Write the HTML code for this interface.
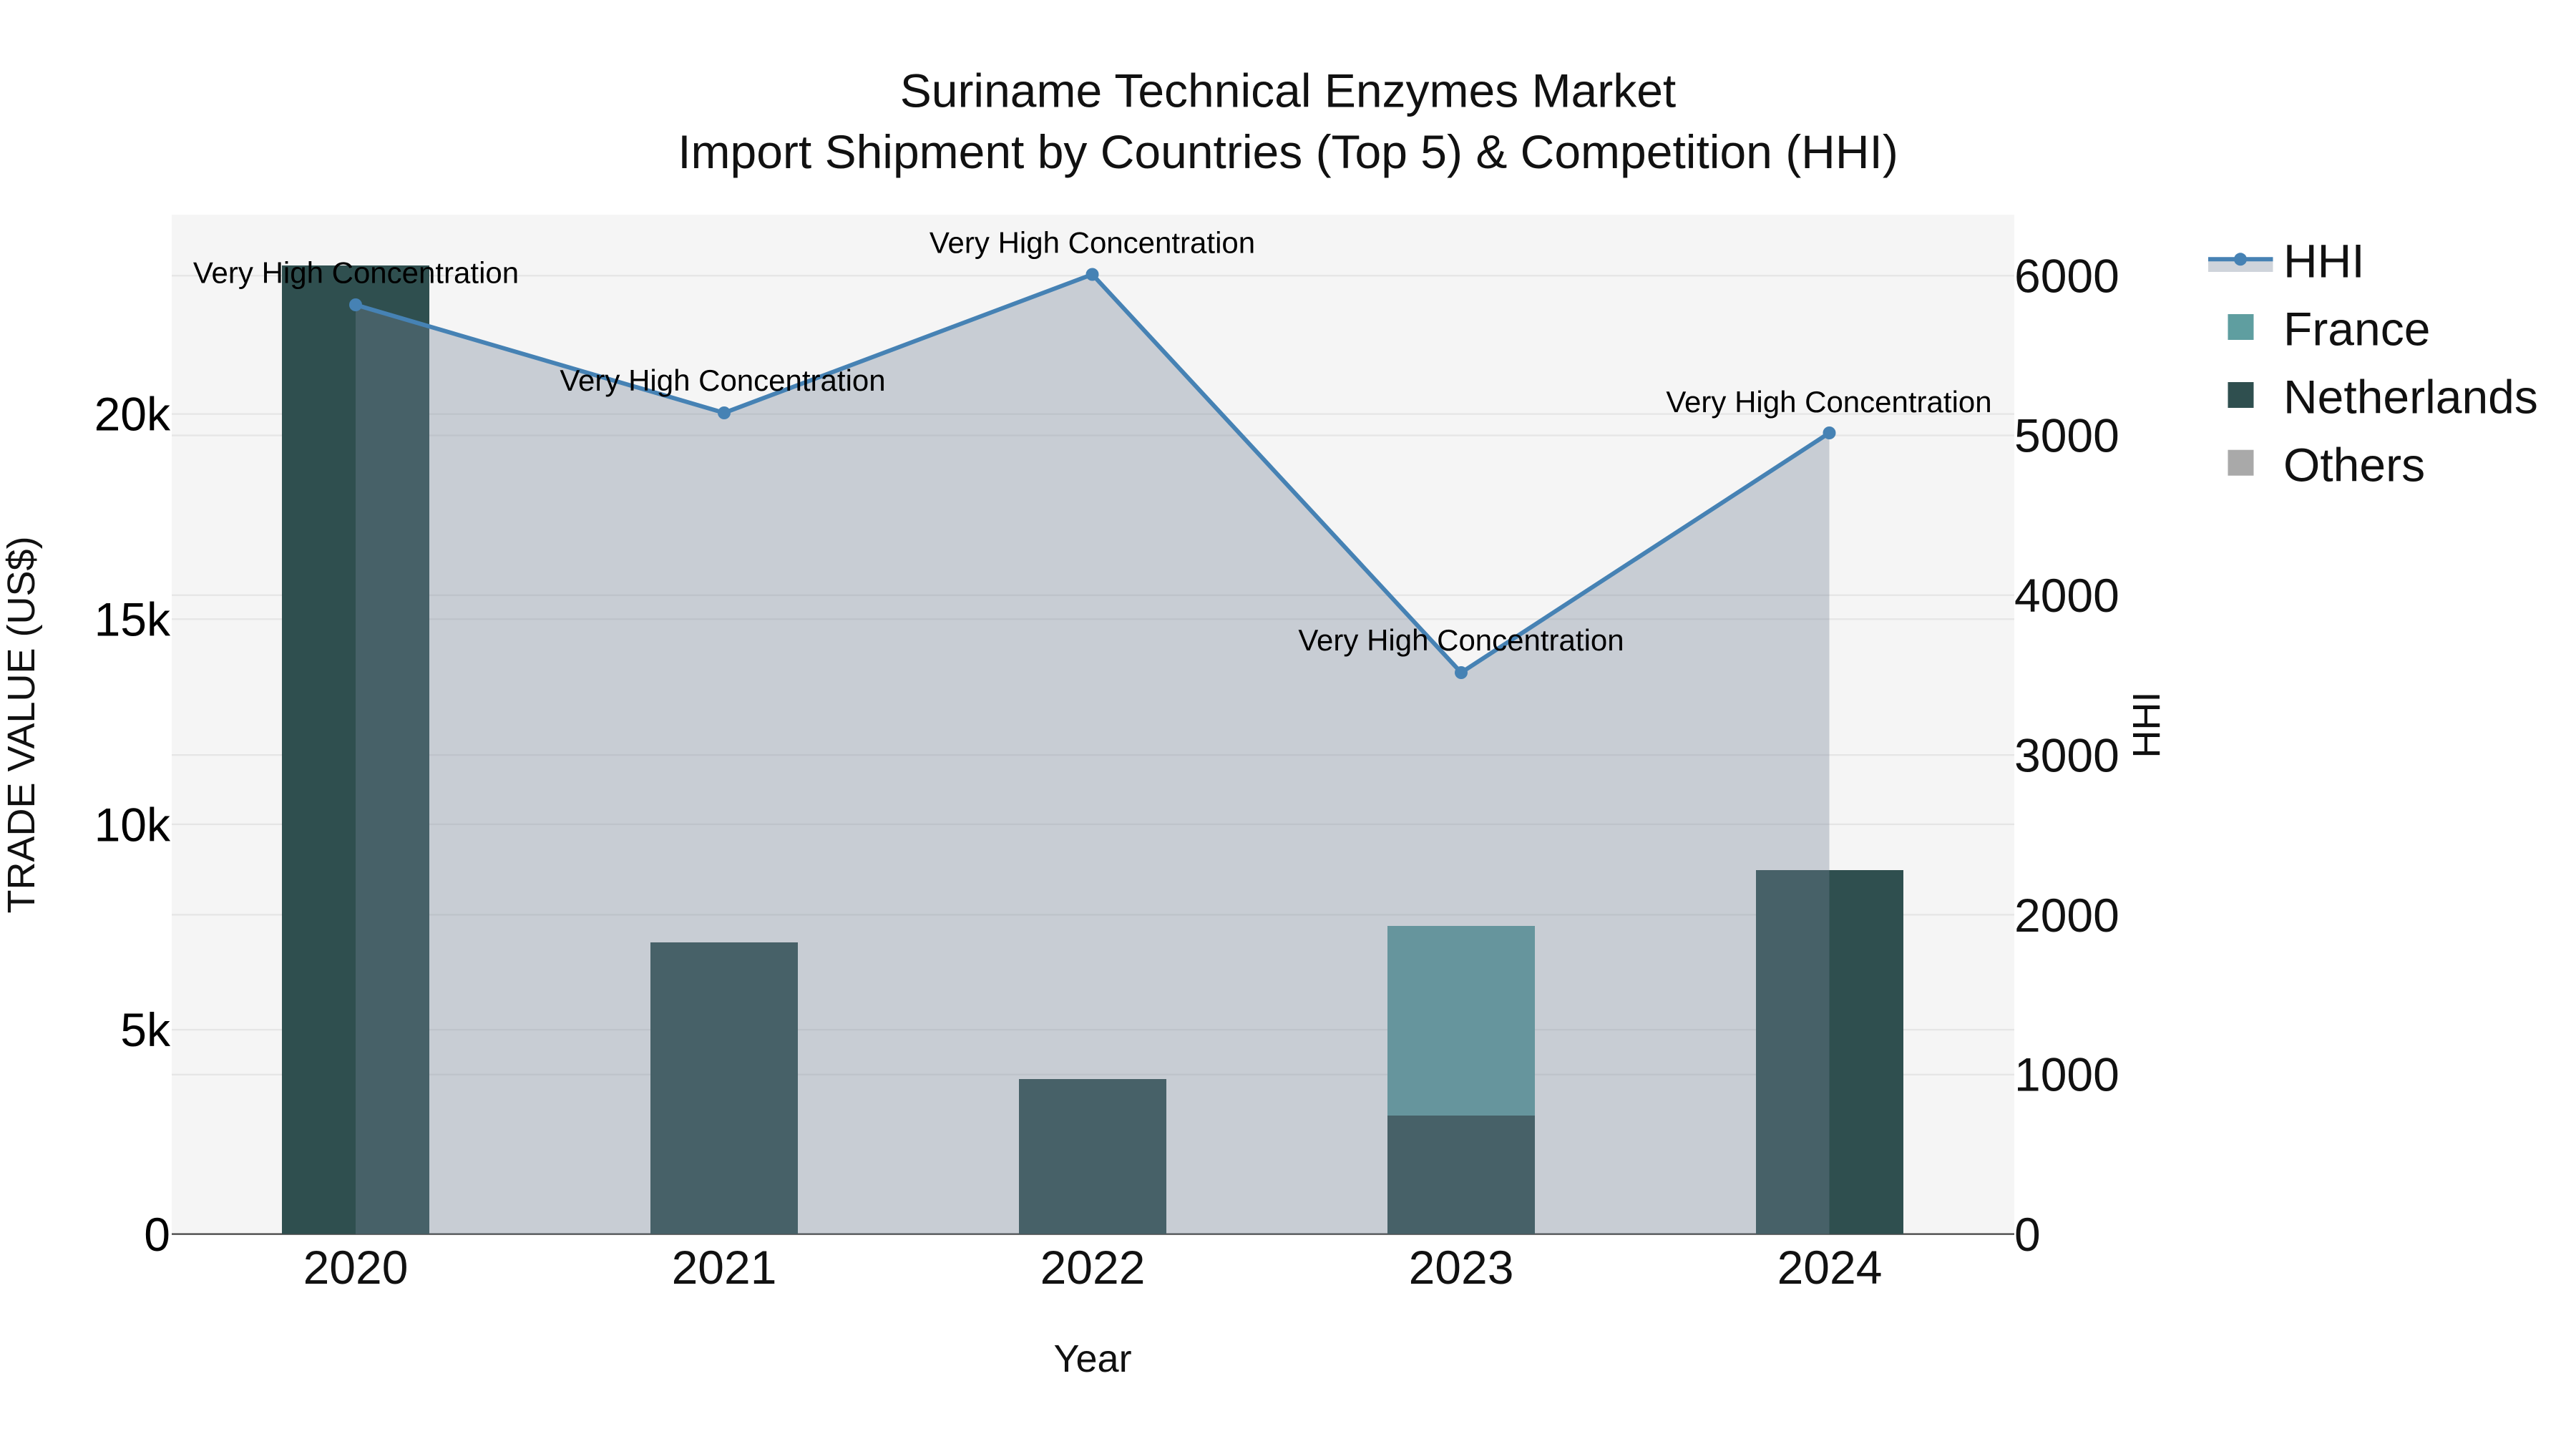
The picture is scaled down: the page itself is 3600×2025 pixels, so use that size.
<!DOCTYPE html>
<html>
<head>
<meta charset="utf-8">
<title>Suriname Technical Enzymes Market</title>
<style>
html,body{margin:0;padding:0;background:#fff;width:3600px;height:2025px;overflow:hidden}
svg{display:block}
text{font-family:"Liberation Sans",Arial,sans-serif;white-space:pre}
.tick{font-size:66px;fill:#111}
.ann{font-size:42px;fill:#000;text-anchor:middle}
.at{font-size:54px;fill:#111}
.t{font-size:66px;fill:#111;text-anchor:middle}
</style>
</head>
<body>
<svg xmlns="http://www.w3.org/2000/svg" width="3600" height="2025" viewBox="0 0 3600 2025">
<rect width="3600" height="2025" fill="#fff"/>
<rect x="240" y="300" width="2575" height="1425" fill="#f5f5f5"/>

<g stroke="#e5e5e5" stroke-width="2.25" fill="none">
<path d="M240 1439H2815M240 1152H2815M240 865.3H2815M240 578.6H2815"/>
<path d="M240 1501.7H2815M240 1278.4H2815M240 1055.1H2815M240 831.8H2815M240 608.5H2815M240 385.2H2815"/>
</g>
<line x1="240" y1="1724.6" x2="2815" y2="1724.6" stroke="#444" stroke-width="2.25"/>

<g>
<rect x="394" y="371" width="206" height="1353.5" fill="#2f4f4f"/>
<rect x="909" y="1317" width="206" height="407.5" fill="#2f4f4f"/>
<rect x="1424" y="1508" width="206" height="216.5" fill="#2f4f4f"/>
<rect x="1939" y="1294" width="206" height="265" fill="#5f9ea0"/>
<rect x="1939" y="1559" width="206" height="165.5" fill="#2f4f4f"/>
<rect x="2454" y="1216" width="206" height="508.5" fill="#2f4f4f"/>
</g>

<polygon points="497,426 1012,577 1526.5,383.5 2042,940 2556.5,605 2556.5,1724.6 497,1724.6" fill="rgb(118,131,153)" fill-opacity="0.35"/>
<polyline points="497,426 1012,577 1526.5,383.5 2042,940 2556.5,605" fill="none" stroke="#4682b4" stroke-width="6" stroke-linejoin="round"/>
<g fill="#4682b4">
<circle cx="497" cy="426" r="9"/>
<circle cx="1012" cy="577" r="9"/>
<circle cx="1526.5" cy="383.5" r="9"/>
<circle cx="2042" cy="940" r="9"/>
<circle cx="2556.5" cy="605" r="9"/>
</g>

<text class="ann" x="497.5" y="395.5">Very High Concentration</text>
<text class="ann" x="1010" y="546">Very High Concentration</text>
<text class="ann" x="1526.5" y="353.5">Very High Concentration</text>
<text class="ann" x="2042" y="909">Very High Concentration</text>
<text class="ann" x="2556" y="576">Very High Concentration</text>

<text class="t" x="1800" y="149.5">Suriname Technical Enzymes Market</text>
<text class="t" x="1800" y="235">Import Shipment by Countries (Top 5) &amp; Competition (HHI)</text>

<g text-anchor="end">
<text class="tick" style="fill:#000" x="238" y="1748">0</text>
<text class="tick" style="fill:#000" x="238" y="1462">5k</text>
<text class="tick" style="fill:#000" x="238" y="1175.5">10k</text>
<text class="tick" style="fill:#000" x="238" y="888.5">15k</text>
<text class="tick" style="fill:#000" x="238" y="601.6">20k</text>
</g>

<g>
<text class="tick" x="2815" y="1748">0</text>
<text class="tick" x="2815" y="1524.5">1000</text>
<text class="tick" x="2815" y="1301.8">2000</text>
<text class="tick" x="2815" y="1078.3">3000</text>
<text class="tick" x="2815" y="855">4000</text>
<text class="tick" x="2815" y="631.6">5000</text>
<text class="tick" x="2815" y="408.4">6000</text>
</g>

<g text-anchor="middle">
<text class="tick" x="497" y="1794">2020</text>
<text class="tick" x="1012" y="1794">2021</text>
<text class="tick" x="1527" y="1794">2022</text>
<text class="tick" x="2042" y="1794">2023</text>
<text class="tick" x="2557" y="1794">2024</text>
</g>

<text class="at" x="1527" y="1917" text-anchor="middle">Year</text>
<text class="at" transform="translate(48 1013) rotate(-90)" text-anchor="middle">TRADE VALUE (US$)</text>
<text class="at" transform="translate(3018 1013) rotate(-90)" text-anchor="middle">HHI</text>

<rect x="3086" y="362" width="90.5" height="18" fill="rgb(118,131,153)" fill-opacity="0.35"/>
<line x1="3086" y1="362.3" x2="3176.5" y2="362.3" stroke="#4682b4" stroke-width="6"/>
<circle cx="3131" cy="362.3" r="9" fill="#4682b4"/>
<rect x="3113.5" y="439" width="36" height="36" fill="#5f9ea0"/>
<rect x="3113.5" y="534" width="36" height="36" fill="#2f4f4f"/>
<rect x="3113.5" y="628.7" width="36" height="36" fill="#a9a9a9"/>
<text class="tick" x="3191" y="387.3">HHI</text>
<text class="tick" x="3191" y="482.3">France</text>
<text class="tick" x="3191" y="577.7">Netherlands</text>
<text class="tick" x="3191" y="672.7">Others</text>
</svg>
</body>
</html>
